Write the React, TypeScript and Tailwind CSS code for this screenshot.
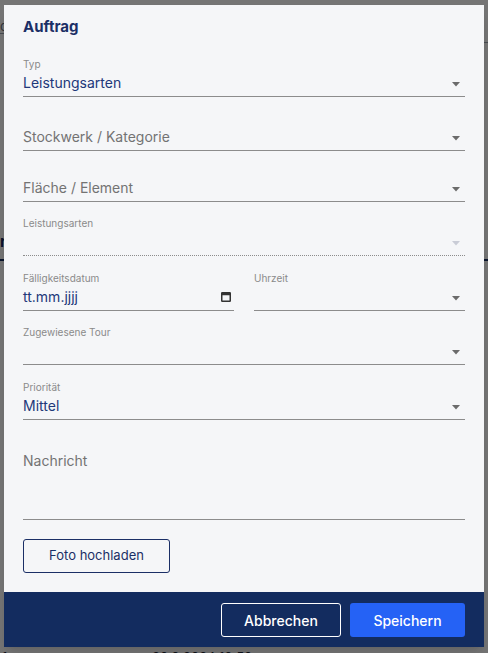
import React from "react";

const NAVY = "text-[#22387a]";

function Arrow({ disabled = false }: { disabled?: boolean }) {
  return (
    <svg width="8" height="5" viewBox="0 0 8 5" className="mr-[5px] mt-[9px] shrink-0">
      <polygon points="0,0 8,0 4,4.5" fill={disabled ? "#c9ccd6" : "#6b6b6b"} />
    </svg>
  );
}

function CalendarIcon() {
  return (
    <svg width="10" height="10" viewBox="0 0 10 10" className="mr-[3px] mt-[5px] shrink-0">
      <rect x="0.75" y="0.75" width="8.5" height="8.5" fill="none" stroke="#333" strokeWidth="1.5" rx="0.5" />
      <rect x="0.75" y="0.75" width="8.5" height="2.5" fill="#333" />
    </svg>
  );
}

type FieldProps = {
  label?: string;
  value?: string;
  placeholder?: string;
  disabled?: boolean;
  className?: string;
  trailing?: "arrow" | "calendar";
};

function Field({ label, value, placeholder, disabled, className = "", trailing = "arrow" }: FieldProps) {
  return (
    <div className={className}>
      <div className="h-[14px] text-[10px] leading-[14px] text-[#8a8a8a]">{label}</div>
      <div
        className={`mt-[2px] flex h-[24px] items-start justify-between border-b ${
          disabled ? "border-dotted border-[#8c8c8c]" : "border-[#8c8c8c]"
        }`}
      >
        <span className={`text-[14px] leading-[20px] ${value ? NAVY : "text-[#737373]"}`}>
          {value ?? placeholder ?? ""}
        </span>
        {trailing === "arrow" ? <Arrow disabled={disabled} /> : <CalendarIcon />}
      </div>
    </div>
  );
}

export default function App() {
  return (
    <div className="relative h-[653px] w-[488px] overflow-hidden bg-white font-['Inter',sans-serif]">
      {/* page behind the dialog */}
      <div className="h-[653px] text-[#1f2937]">
        <div className="flex h-[43px]">
          <div className="h-[34px] w-[244px] border-b border-[#9ca3af] pt-[18px] text-[13px] leading-[16px] text-[#6b7280]">
            c
          </div>
          <div className="h-[43px] flex-1 border-b border-[#9ca3af]" />
        </div>
        <div className="h-[186px]" />
        <div className="h-[32px] border-b-2 border-[#142d60] pt-[3px] text-[15px] font-bold leading-[20px] text-[#142d60]">
          ri
        </div>
        <div className="h-[388px]" />
        <div className="flex h-[16px] text-[13px] leading-[16px]">
          <span className="w-[152px] pl-[2px]">1</span>
          <span>30.9.2024 10:50</span>
        </div>
      </div>

      {/* dimmed backdrop */}
      <div className="absolute inset-0 bg-black/[0.54]" />

      {/* dialog */}
      <div className="absolute inset-0 flex justify-center pt-[5px]">
        <div className="flex h-[642px] w-[480px] flex-col bg-[#f5f6f8] shadow-lg">
          <div className="flex-1 px-[19px] pb-[19px] pt-[12px]">
            <h2 className="h-[20px] text-[15px] font-bold leading-[20px] text-[#1b2f66]">Auftrag</h2>

            <Field className="mt-[20px]" label="Typ" value="Leistungsarten" />
            <Field className="mt-[14px]" placeholder="Stockwerk / Kategorie" />
            <Field className="mt-[11px]" placeholder="Fläche / Element" />
            <Field className="mt-[14px]" label="Leistungsarten" disabled />

            <div className="mt-[15px] flex gap-[20px]">
              <Field className="w-[211px]" label="Fälligkeitsdatum" value="tt.mm.jjjj" trailing="calendar" />
              <Field className="w-[211px]" label="Uhrzeit" />
            </div>

            <Field className="mt-[14px]" label="Zugewiesene Tour" />
            <Field className="mt-[15px]" label="Priorität" value="Mittel" />

            <div className="h-[100px] border-b border-[#8c8c8c] pt-[28px]">
              <span className="text-[14px] leading-[20px] text-[#737373]">Nachricht</span>
            </div>

            <button
              type="button"
              className="mt-[19px] h-[34px] w-[147px] rounded-[3px] border border-[#1b2f66] text-[13px] text-[#1b2f66]"
            >
              Foto hochladen
            </button>
          </div>

          <div className="flex h-[55px] items-start justify-end gap-[9px] bg-[#132c5f] px-[19px] pt-[11px]">
            <button
              type="button"
              className="h-[34px] w-[120px] rounded-[3px] border border-white text-[14px] font-medium text-white"
            >
              Abbrechen
            </button>
            <button
              type="button"
              className="h-[34px] w-[115px] rounded-[3px] bg-[#2562f5] text-[14px] font-medium text-white"
            >
              Speichern
            </button>
          </div>
        </div>
      </div>
    </div>
  );
}
